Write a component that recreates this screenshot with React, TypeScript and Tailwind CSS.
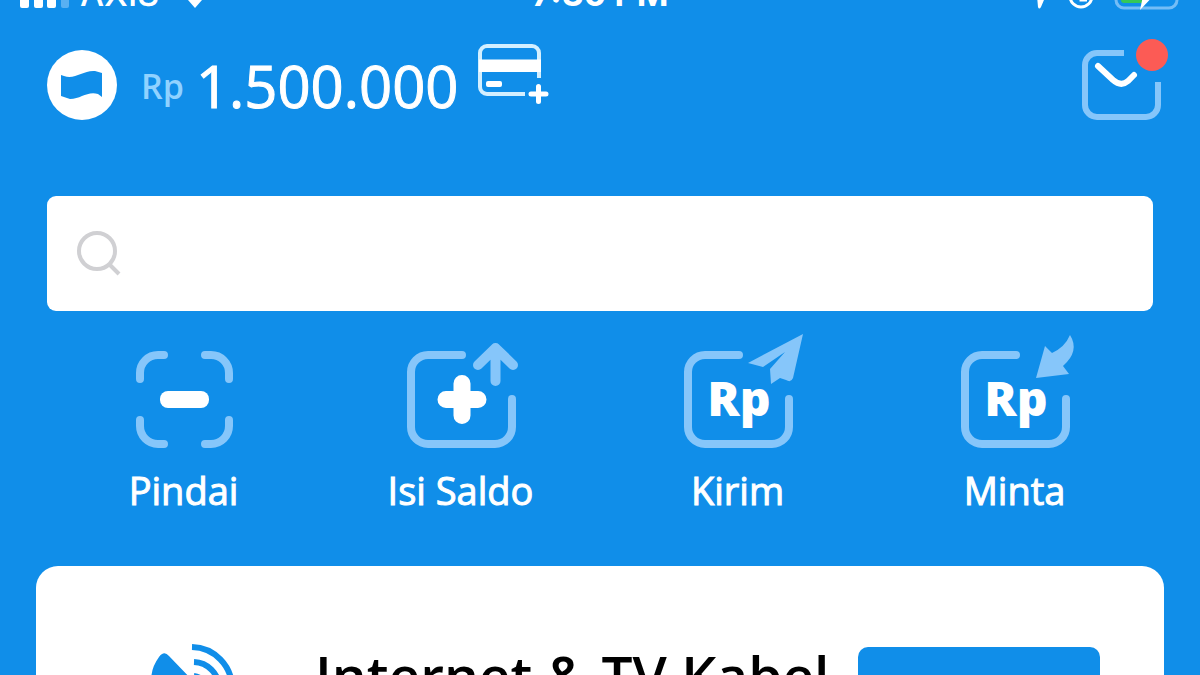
import React from 'react';

interface Action {
  label: string;
  icon: React.ReactNode;
}

function BoxFrame() {
  return (
    <path
      d="M61 23H27a17 17 0 0 0-17 17v55a17 17 0 0 0 17 17h67a17 17 0 0 0 17-17V67"
      fill="none"
      stroke="#86c6fa"
      strokeWidth="8"
      strokeLinecap="round"
    />
  );
}

function ActionIcon({ children }: { children: React.ReactNode }) {
  return (
    <svg viewBox="0 0 120 120" className="w-[120px] h-[120px] overflow-visible" aria-hidden="true">
      {children}
    </svg>
  );
}

function RpMark() {
  return (
    <text
      x="61"
      y="84"
      textAnchor="middle"
      className="fill-white text-[48px] font-extrabold"
    >
      Rp
    </text>
  );
}

const actions: Action[] = [
  {
    label: 'Pindai',
    icon: (
      <ActionIcon>
        <path
          d="M16 47V41a18 18 0 0 1 18-18h6M81 23h6a18 18 0 0 1 18 18v6M105 88v6a18 18 0 0 1-18 18h-6M40 112h-6a18 18 0 0 1-18-18v-6"
          fill="none"
          stroke="#86c6fa"
          strokeWidth="8"
          strokeLinecap="round"
        />
        <rect x="36" y="59" width="49" height="17" rx="8" fill="#fff" />
      </ActionIcon>
    ),
  },
  {
    label: 'Isi Saldo',
    icon: (
      <ActionIcon>
        <BoxFrame />
        <path d="M45 67.500h32M61 51.500v32" stroke="#fff" strokeWidth="17" strokeLinecap="round" />
        <path
          d="M94.500 49V16M77 33l17.500-17L112 33"
          fill="none"
          stroke="#86c6fa"
          strokeWidth="10"
          strokeLinecap="round"
          strokeLinejoin="round"
        />
      </ActionIcon>
    ),
  },
  {
    label: 'Kirim',
    icon: (
      <ActionIcon>
        <BoxFrame />
        <path d="M70 31L125 2L115 46Q113 51 108 48L102 46L93 52L92 37L107 20L85 35Z" fill="#86c6fa" />
        <RpMark />
      </ActionIcon>
    ),
  },
  {
    label: 'Minta',
    icon: (
      <ActionIcon>
        <BoxFrame />
        <path d="M81 46L90 14L97 21Q110 15 115 3Q125 19 108 34L114 42Z" fill="#86c6fa" />
        <RpMark />
      </ActionIcon>
    ),
  },
];

function StatusBar() {
  return (
    <div className="relative -mt-6 h-9 px-5 flex items-center justify-between text-white">
      <div className="flex items-center gap-2.5">
        <svg viewBox="0 0 50 32" className="w-[50px] h-8" aria-hidden="true">
          <rect x="0" y="20" width="9" height="10" rx="2" fill="#fff" />
          <rect x="14" y="15" width="9" height="15" rx="2" fill="#fff" />
          <rect x="27" y="9" width="9" height="21" rx="2" fill="#fff" />
          <rect x="41" y="3" width="8" height="27" rx="2" fill="#58b0f2" />
        </svg>
        <span className="font-[Inter] font-medium text-[34px] leading-9">AXIS</span>
        <svg viewBox="0 0 40 32" className="w-10 h-8 ml-1.5" aria-hidden="true">
          <path d="M4 11Q20-3 36 11M10 18Q20 9 30 18" fill="none" stroke="#fff" strokeWidth="5" />
          <path d="M13 22Q20 17 27 22L20 30Z" fill="#fff" />
        </svg>
      </div>
      <span className="absolute left-1/2 -translate-x-1/2 font-[Inter] font-bold text-[34px] leading-9">
        7:30 PM
      </span>
      <div className="flex items-center gap-3">
        <svg viewBox="0 0 30 32" className="w-[30px] h-8" aria-hidden="true">
          <path d="M0 16L28 3L17 29Q15 32 14 29L13 18Z" fill="#fff" />
        </svg>
        <svg viewBox="0 0 30 32" className="w-[30px] h-8" aria-hidden="true">
          <circle cx="15" cy="18" r="11" fill="none" stroke="#fff" strokeWidth="3" />
          <path d="M15 11v11h6" fill="none" stroke="#fff" strokeWidth="3" />
        </svg>
        <svg viewBox="0 0 72 36" className="w-[72px] h-9" aria-hidden="true">
          <rect x="8" y="3" width="61" height="29" rx="8" fill="none" stroke="#74bdf6" strokeWidth="3" />
          <path d="M13 8h26v19H16a3 3 0 0 1-3-3Z" fill="#35c759" />
          <path d="M46 2L26 20H35L32 34L50 15H41Z" fill="#fff" />
        </svg>
      </div>
    </div>
  );
}

function Header() {
  return (
    <header className="mt-6 pl-[47px] pr-[30px] flex items-start">
      <svg viewBox="0 0 70 70" className="w-[70px] h-[70px] mt-3.5" aria-hidden="true">
        <circle cx="35" cy="35" r="35" fill="#fff" />
        <path
          d="M14 25L17 26C28 30 36 20 48 21L55 23V47L51 44C40 41 34 49 23 49L14 46Z"
          fill="#108ee9"
        />
      </svg>
      <div className="mt-2.5 ml-6 flex items-center gap-3">
        <span className="text-[34px] leading-[48px] font-semibold text-[#90d2ff]">Rp</span>
        <span className="text-[58px] leading-[80px] text-white [-webkit-text-stroke:1px_#fff]">
          1.500.000
        </span>
      </div>
      <button type="button" aria-label="Tambah kartu" className="mt-1.5 ml-4">
        <svg viewBox="0 0 76 64" className="w-[76px] h-16">
          <path
            d="M64 36V11a7 7 0 0 0-7-7H12a7 7 0 0 0-7 7v34a7 7 0 0 0 7 7h38"
            fill="none"
            stroke="#d3efff"
            strokeWidth="4"
          />
          <path d="M4 17.500H66V30H4Z" fill="#fff" />
          <rect x="11" y="39" width="16" height="6" rx="2" fill="#fff" />
          <path d="M56 52h15M63.500 44.500v15" stroke="#fff" strokeWidth="5" strokeLinecap="round" />
        </svg>
      </button>
      <button type="button" aria-label="Pesan" className="ml-auto">
        <svg viewBox="0 0 90 86" className="w-[90px] h-[86px]">
          <path
            d="M44 17H17A12 12 0 0 0 5 29V69a12 12 0 0 0 12 12H66A12 12 0 0 0 78 69V46"
            fill="none"
            stroke="#86c6fa"
            strokeWidth="6"
          />
          <path
            d="M18 30L33 44Q41 51 48 45L54 39"
            fill="none"
            stroke="#fff"
            strokeWidth="6"
            strokeLinecap="round"
          />
          <circle cx="72" cy="19" r="16" fill="#fc5b55" />
        </svg>
      </button>
    </header>
  );
}

export default function App() {
  return (
    <div className="h-screen overflow-hidden bg-[#108ee9] font-['Open_Sans',sans-serif]">
      <div className="flex flex-col">
        <StatusBar />
        <Header />

        {/* SEARCH */}
        <label className="mt-[70px] mx-[47px] h-[115px] px-[29px] flex items-center gap-4 rounded-[9px] bg-white">
          <svg viewBox="0 0 46 46" className="w-[46px] h-[46px] shrink-0" aria-hidden="true">
            <circle cx="21" cy="20" r="18" fill="none" stroke="#d0d0d3" strokeWidth="4" />
            <path d="M33 33L43 43" stroke="#d0d0d3" strokeWidth="4" />
          </svg>
          <input
            type="text"
            aria-label="Cari"
            className="flex-1 min-w-0 text-[38px] text-gray-800 outline-none"
          />
        </label>

        {/* ACTIONS */}
        <nav className="mt-[21px] ml-[45px] mr-[47px] grid grid-cols-4">
          {actions.map((action) => (
            <button key={action.label} type="button" className="flex flex-col items-center gap-3">
              {action.icon}
              <span className="text-[38px] leading-[52px] text-white [-webkit-text-stroke:1px_#fff]">
                {action.label}
              </span>
            </button>
          ))}
        </nav>

        {/* BILL CARD */}
        <section className="mt-[50px] mx-9 pt-[81px] pb-20 pl-[108px] pr-16 flex items-start rounded-t-[22px] bg-white">
          <svg viewBox="0 0 100 100" className="w-[100px] h-[100px] shrink-0 -mt-1.5" aria-hidden="true">
            <path d="M15 16Q20 9 25 15L78 70Q52 92 24 70Q-4 42 15 16Z" fill="#108ee9" />
            <path
              d="M48 6A41 41 0 0 1 88 47M50 21A26 26 0 0 1 75 46M50 35A12 12 0 0 1 61 46"
              fill="none"
              stroke="#108ee9"
              strokeWidth="6"
            />
          </svg>
          <h2 className="-mt-2 ml-[71px] text-[55px] leading-[72px] font-semibold text-black whitespace-nowrap">
            Internet &amp; TV Kabel
          </h2>
          <button
            type="button"
            aria-label="Bayar"
            className="ml-auto w-[242px] h-[88px] rounded-[10px] bg-[#108ee9]"
          />
        </section>
      </div>
    </div>
  );
}
